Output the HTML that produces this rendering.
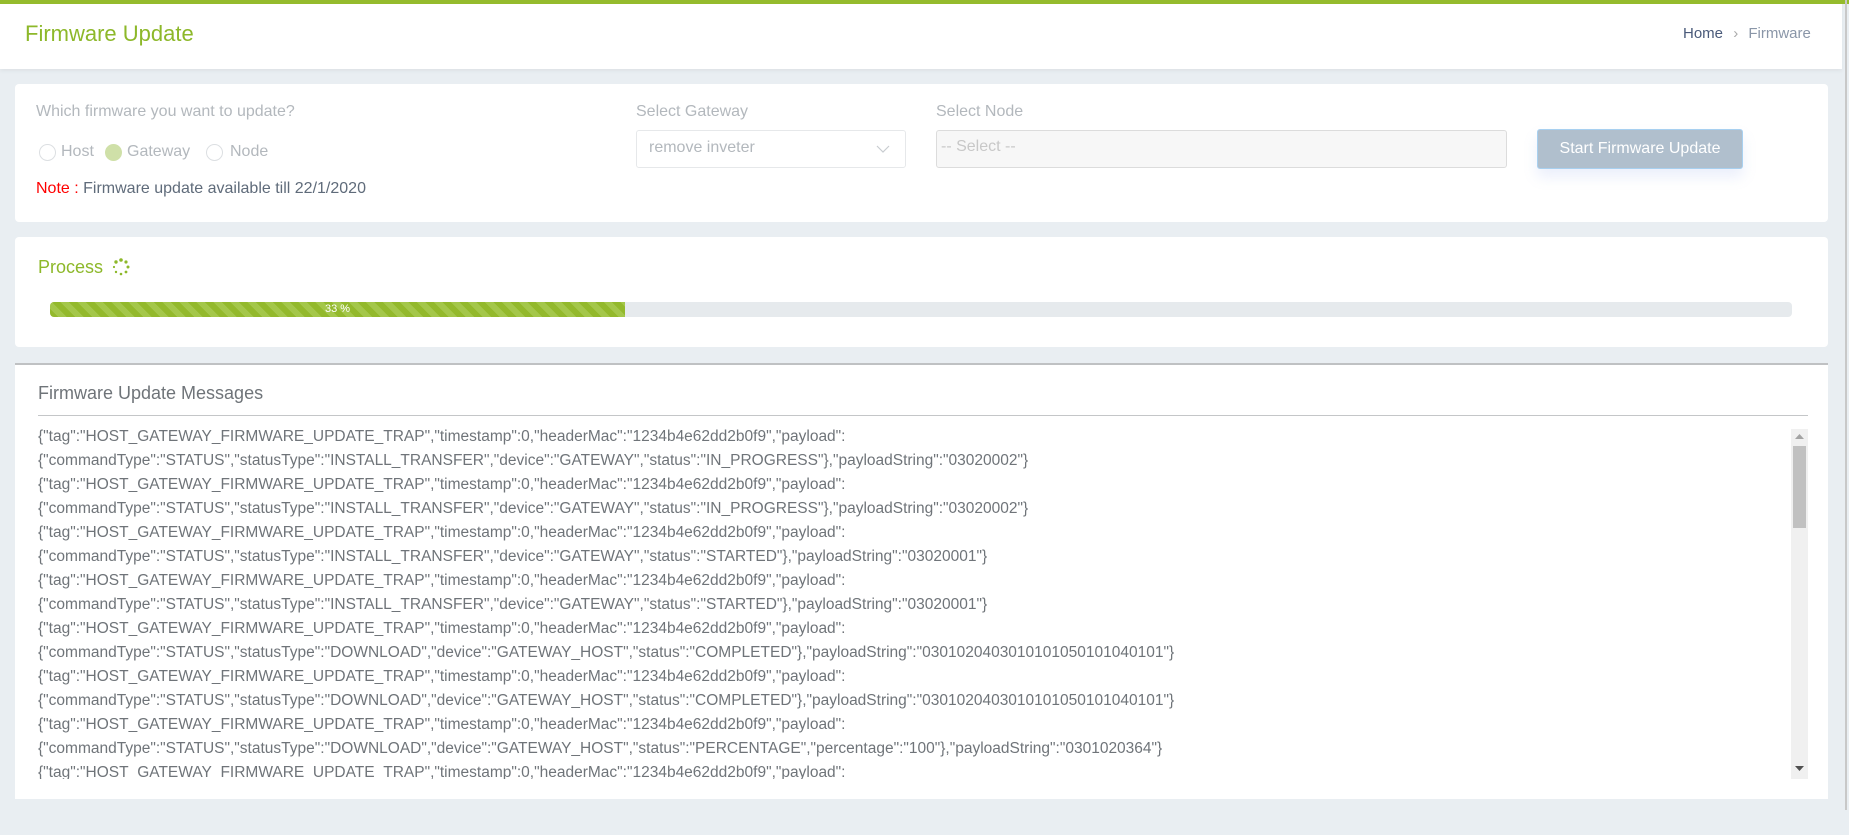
<!DOCTYPE html>
<html><head><meta charset="utf-8"><style>
*{box-sizing:border-box;margin:0;padding:0}
body{width:1849px;height:835px;overflow:hidden;background:#e9eef2;font-family:"Liberation Sans",sans-serif;position:relative}
.abs{position:absolute}
.card{position:absolute;background:#fff;border-radius:4px;left:15px;width:1813px}
.lbl{position:absolute;font-size:16px;color:#b3b8bd;white-space:nowrap}
.radio{position:absolute;width:17px;height:17px;border-radius:50%;border:1px solid #dcdfe2;top:144px}
.msg{font-size:15.5px;color:#6f7479;line-height:24px;white-space:nowrap}
</style></head><body>
<div class="abs" style="left:0;top:0;width:1842px;height:69px;background:#fff;box-shadow:0 2px 4px rgba(0,0,0,.05)"></div>
<div class="abs" style="left:0;top:0;width:1849px;height:4px;background:#95bb2d"></div>
<div class="abs" style="left:25px;top:21px;font-size:22px;color:#8db82a">Firmware Update</div>
<div class="abs" style="left:1683px;top:25px;font-size:15px;color:#4a5a7a">Home <span style="color:#aaa;margin:0 6px">&#8250;</span> <span style="color:#8a96a8">Firmware</span></div>

<div class="card" style="top:84px;height:138px"></div>
<div class="lbl" style="left:36px;top:103px">Which firmware you want to update?</div>
<div class="radio" style="left:39px"></div>
<div class="lbl" style="left:61px;top:143px">Host</div>
<div class="radio" style="left:105px;background:#cfe0a8;border-color:#cfe0a8"></div>
<div class="lbl" style="left:127px;top:143px">Gateway</div>
<div class="radio" style="left:206px"></div>
<div class="lbl" style="left:230px;top:143px">Node</div>
<div class="abs" style="left:36px;top:180px;font-size:16px;color:#5f6b7a;white-space:nowrap"><span style="color:#f00">Note :</span> Firmware update available till 22/1/2020</div>
<div class="lbl" style="left:636px;top:103px">Select Gateway</div>
<div class="abs" style="left:636px;top:130px;width:270px;height:38px;border:1px solid #e6e8ea;border-radius:3px"></div>
<div class="lbl" style="left:649px;top:139px">remove inveter</div>
<svg class="abs" style="left:876px;top:144px" width="14" height="10"><path d="M1 2l6 6 6-6" fill="none" stroke="#c8ccd0" stroke-width="1.2"/></svg>
<div class="lbl" style="left:936px;top:103px">Select Node</div>
<div class="abs" style="left:936px;top:130px;width:571px;height:38px;border:1px solid #dcdcdc;border-radius:3px;background:#f7f7f7"></div>
<div class="lbl" style="left:941px;top:138px;color:#c8c8c8">-- Select --</div>
<div class="abs" style="left:1537px;top:129px;width:206px;height:40px;background:#b0bfcd;border:1px solid #a8d0f0;border-radius:3px;color:#fff;font-size:16px;text-align:center;line-height:38px;box-shadow:0 8px 14px rgba(120,150,230,.15)">Start Firmware Update</div>

<div class="card" style="top:237px;height:110px"></div>
<div class="abs" style="left:38px;top:257px;font-size:18px;color:#8db82a">Process</div>
<svg class="abs" style="left:112px;top:258px" width="18" height="18"><g fill="#8db82a"><circle cx="9" cy="2" r="1.8"/><circle cx="14" cy="4" r="1.6"/><circle cx="16" cy="9" r="1.5"/><circle cx="14" cy="14" r="1.4"/><circle cx="9" cy="16" r="1.3"/><circle cx="4" cy="14" r="1.2"/><circle cx="2" cy="9" r="1.1"/><circle cx="4" cy="4" r="1.7"/></g></svg>
<div class="abs" style="left:50px;top:302px;width:1742px;height:15px;background:#e6eaed;border-radius:4px;overflow:hidden">
<div style="width:575px;height:15px;background:repeating-linear-gradient(45deg,#93b92c 0 6px,#a4c74a 6px 12px);color:#fff;font-size:11px;text-align:center;line-height:15px">33 %</div></div>

<div class="card" style="top:363px;height:436px;border-top:2px solid #bfc1c3;border-radius:0"></div>
<div class="abs" style="left:38px;top:383px;font-size:18px;color:#6f7479">Firmware Update Messages</div>
<div class="abs" style="left:38px;top:415px;width:1770px;height:1px;background:#c4c6c8"></div>
<div class="abs" style="left:38px;top:429px;width:1753px;height:350px;overflow:hidden">
<div class="msg" style="margin-top:-4px">
{"tag":"HOST_GATEWAY_FIRMWARE_UPDATE_TRAP","timestamp":0,"headerMac":"1234b4e62dd2b0f9","payload":<br>{"commandType":"STATUS","statusType":"INSTALL_TRANSFER","device":"GATEWAY","status":"IN_PROGRESS"},"payloadString":"03020002"}<br>
{"tag":"HOST_GATEWAY_FIRMWARE_UPDATE_TRAP","timestamp":0,"headerMac":"1234b4e62dd2b0f9","payload":<br>{"commandType":"STATUS","statusType":"INSTALL_TRANSFER","device":"GATEWAY","status":"IN_PROGRESS"},"payloadString":"03020002"}<br>
{"tag":"HOST_GATEWAY_FIRMWARE_UPDATE_TRAP","timestamp":0,"headerMac":"1234b4e62dd2b0f9","payload":<br>{"commandType":"STATUS","statusType":"INSTALL_TRANSFER","device":"GATEWAY","status":"STARTED"},"payloadString":"03020001"}<br>
{"tag":"HOST_GATEWAY_FIRMWARE_UPDATE_TRAP","timestamp":0,"headerMac":"1234b4e62dd2b0f9","payload":<br>{"commandType":"STATUS","statusType":"INSTALL_TRANSFER","device":"GATEWAY","status":"STARTED"},"payloadString":"03020001"}<br>
{"tag":"HOST_GATEWAY_FIRMWARE_UPDATE_TRAP","timestamp":0,"headerMac":"1234b4e62dd2b0f9","payload":<br>{"commandType":"STATUS","statusType":"DOWNLOAD","device":"GATEWAY_HOST","status":"COMPLETED"},"payloadString":"0301020403010101050101040101"}<br>
{"tag":"HOST_GATEWAY_FIRMWARE_UPDATE_TRAP","timestamp":0,"headerMac":"1234b4e62dd2b0f9","payload":<br>{"commandType":"STATUS","statusType":"DOWNLOAD","device":"GATEWAY_HOST","status":"COMPLETED"},"payloadString":"0301020403010101050101040101"}<br>
{"tag":"HOST_GATEWAY_FIRMWARE_UPDATE_TRAP","timestamp":0,"headerMac":"1234b4e62dd2b0f9","payload":<br>{"commandType":"STATUS","statusType":"DOWNLOAD","device":"GATEWAY_HOST","status":"PERCENTAGE","percentage":"100"},"payloadString":"0301020364"}<br>
{"tag":"HOST_GATEWAY_FIRMWARE_UPDATE_TRAP","timestamp":0,"headerMac":"1234b4e62dd2b0f9","payload":
</div></div>
<div class="abs" style="left:1791px;top:429px;width:17px;height:350px;background:#f0f0f0"></div>
<div class="abs" style="left:1793px;top:446px;width:13px;height:82px;background:#c1c1c1"></div>
<svg class="abs" style="left:1795px;top:434px" width="9" height="6"><path d="M0 5L4.5 0 9 5z" fill="#a3a3a3"/></svg>
<svg class="abs" style="left:1795px;top:766px" width="9" height="6"><path d="M0 0L4.5 5 9 0z" fill="#505050"/></svg>
<div class="abs" style="left:1845px;top:0;width:2px;height:810px;background:#c8c8c8"></div>
</body></html>
